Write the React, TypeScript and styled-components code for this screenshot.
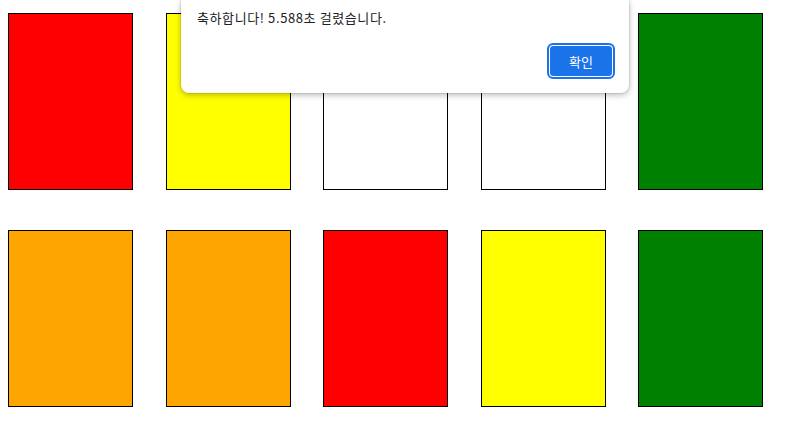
import React from "react";
import styled, { createGlobalStyle } from "styled-components";

const colors: string[] = [
    "#ff0000", "#ffff00", "#ffffff", "#ffffff", "#008000",
    "#ffa500", "#ffa500", "#ff0000", "#ffff00", "#008000",
];

function App() {
    return (
        <>
            <GlobalStyle />
            <Board>
                {colors.map((color, i) => (
                    <Card key={i} color={color} />
                ))}
            </Board>
            <Dialog>
                <Message>축하합니다! 5.588초 걸렸습니다.</Message>
                <Actions>
                    <OkButton autoFocus>확인</OkButton>
                </Actions>
            </Dialog>
        </>
    );
}

const GlobalStyle = createGlobalStyle`
    html, body {
        background: #fff;
    }

    body {
        margin: 8px;
        font-family: "Liberation Sans", Arial, sans-serif;
    }
`;

const Board = styled.div`
    display: grid;
    grid-template-columns: repeat(5, 125px);
    grid-auto-rows: 177px;
    column-gap: 32.5px;
    row-gap: 40px;
    padding-top: 5px;
`;

const Card = styled.div<{ color: string }>`
    box-sizing: border-box;
    background: ${props => props.color};
    border: 1px solid #000;
`;

const Dialog = styled.div`
    position: absolute;
    top: 0;
    left: 181px;
    width: 448px;
    box-sizing: border-box;
    padding: 0 16px 16px;
    background: #fff;
    border-radius: 0 0 8px 8px;
    box-shadow: 0 0 0 1px rgba(0, 0, 0, 0.07), 0 2px 6px rgba(0, 0, 0, 0.28);
    font-family: "Noto Sans CJK KR", "Noto Sans", sans-serif;
`;

const Message = styled.div`
    margin-top: 8px;
    height: 20px;
    line-height: 20px;
    font-size: 13px;
    letter-spacing: 0.6px;
    color: #202124;
`;

const Actions = styled.div`
    display: flex;
    justify-content: flex-end;
    margin-top: 16px;
`;

const OkButton = styled.button`
    width: 64px;
    height: 32px;
    margin-top: 1px;
    box-sizing: border-box;
    border: 1px solid #fff;
    border-radius: 4px;
    background: #1a73e8;
    outline: 2px solid #1a73e8;
    outline-offset: 0;
    color: #fff;
    font-family: "Noto Sans CJK KR", "Noto Sans", sans-serif;
    font-size: 13px;
    padding: 0;
    cursor: pointer;
`;

export default App;
